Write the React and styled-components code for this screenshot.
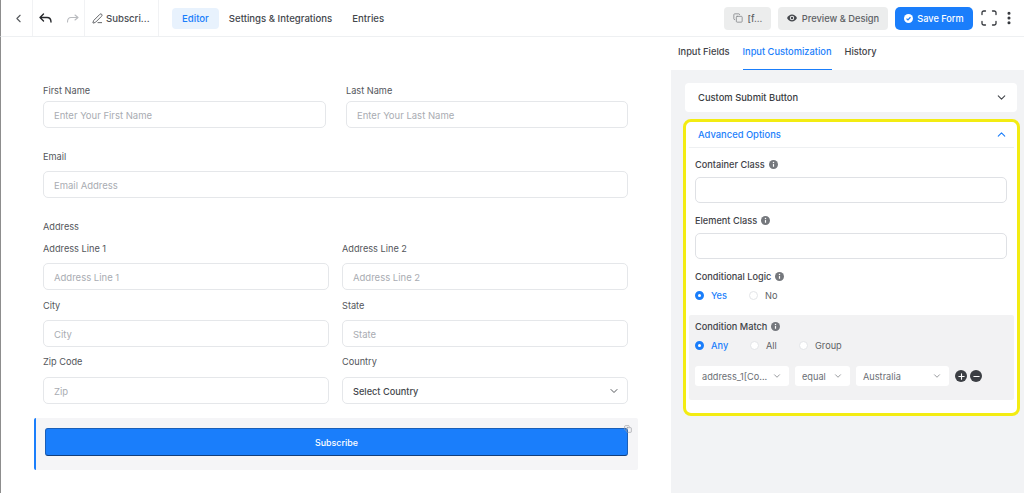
import React from "react";
import styled, { createGlobalStyle } from "styled-components";
import { ChevronLeft, ChevronDown, ChevronUp, PenLine, Copy, EllipsisVertical, Plus, Minus } from "lucide-react";

const Global = createGlobalStyle`
  html, body { margin: 0; padding: 0; background: #fff; }
  body { font-family: Inter, "Liberation Sans", sans-serif; color: #444; }
  * { box-sizing: border-box; }
`;

const Page = styled.div`
  width: 1024px;
  height: 493px;
  overflow: hidden;
  display: flex;
  flex-direction: column;
`;

const TopBar = styled.header`
  height: 37px;
  display: flex;
  align-items: center;
  border-bottom: 1px solid #eef0f2;
  border-left: 1px solid #8d8d8d;
  flex-shrink: 0;
`;

const BarCell = styled.div`
  height: 36px;
  display: flex;
  align-items: center;
  gap: ${(p) => p.$gap || 0}px;
  width: ${(p) => p.$width}px;
  padding-left: ${(p) => p.$left || 0}px;
  border-right: 1px solid #f1f2f4;
  font-size: 9.6px;
  font-weight: 500;
  color: #4a4d52;
`;

const Nav = styled.nav`
  display: flex;
  align-items: center;
  margin-left: 13px;
`;

const NavItem = styled.div`
  height: 21px;
  display: flex;
  align-items: center;
  padding: 0 10px;
  border-radius: 4px;
  font-size: 9.6px;
  font-weight: 500;
  background: ${(p) => (p.$active ? "#e8f2fd" : "transparent")};
  color: ${(p) => (p.$active ? "#1a7efb" : "#44474c")};
`;

const BarActions = styled.div`
  margin-left: auto;
  display: flex;
  align-items: center;
  padding-right: 7px;
`;

const GreyButton = styled.div`
  height: 23px;
  width: ${(p) => p.$width}px;
  margin-right: 7px;
  background: #eceded;
  border-radius: 4px;
  display: flex;
  align-items: center;
  justify-content: center;
  gap: 5px;
  font-size: 9.3px;
  font-weight: 500;
  color: #606266;
`;

const SaveButton = styled.div`
  height: 23px;
  width: 78px;
  margin-right: 8px;
  background: #1a7efb;
  border-radius: 5px;
  color: #fff;
  font-size: 9.2px;
  font-weight: 500;
  display: flex;
  align-items: center;
  justify-content: center;
  gap: 4px;
`;

const MoreIcon = styled(EllipsisVertical)`
  margin-left: 4px;
`;

const Body = styled.div`
  flex: 1;
  display: flex;
  min-height: 0;
`;

const Canvas = styled.main`
  width: 671px;
  flex-shrink: 0;
  border-left: 1px solid #8d8d8d;
  padding: 46px 0 0 33px;
`;

const FormInner = styled.div`
  width: 604px;
`;

const Row = styled.div`
  display: grid;
  grid-template-columns: ${(p) => p.$cols || "1fr"};
  column-gap: ${(p) => p.$gap || 0}px;
  padding: 0 10px 0 9px;
  margin-bottom: ${(p) => p.$bottom || 0}px;
`;

const Field = styled.div`
  display: flex;
  flex-direction: column;
`;

const Label = styled.label`
  height: 14px;
  line-height: 14px;
  padding-top: 1px;
  font-size: 9.2px;
  color: #53565b;
  margin-bottom: ${(p) => p.$bottom}px;
`;

const Input = styled.div`
  height: 27px;
  border: 1px solid #e5e7ea;
  border-radius: 5px;
  display: flex;
  align-items: center;
  justify-content: space-between;
  padding: 1px ${(p) => (p.$filled ? 7 : 10)}px 0 10px;
  font-size: ${(p) => (p.$filled ? 9.2 : 9.5)}px;
  color: ${(p) => (p.$filled ? "#44474c" : "#a9acb2")};
  font-weight: ${(p) => (p.$filled ? 500 : 400)};
`;

const SectionTitle = styled.div`
  height: 14px;
  line-height: 14px;
  padding: 1px 0 0 9px;
  font-size: 9.2px;
  color: #53565b;
  margin-bottom: 8px;
`;

const SubmitWrap = styled.div`
  position: relative;
  height: 52px;
  margin-top: 14px;
  background: #f5f5f7;
  border-left: 2px solid #1a7efb;
  border-radius: 2px;
  padding: 10px 10px 0 9px;
`;

const SubmitButton = styled.div`
  height: 28px;
  background: #1a7efb;
  border: 1px solid #1a5fb8;
  border-bottom: 1px solid #123f7c;
  border-radius: 3px;
  display: flex;
  align-items: center;
  justify-content: center;
  color: #fff;
  font-size: 8.9px;
  font-weight: 500;
`;

const CopyMark = styled.span`
  position: absolute;
  top: 7px;
  right: 6px;
  color: #9a9ca0;
  display: flex;
`;

const Side = styled.aside`
  flex: 1;
  background: #f2f3f5;
  display: flex;
  flex-direction: column;
`;

const Tabs = styled.div`
  height: 33px;
  background: #fff;
  display: flex;
  padding-left: 7px;
  gap: 13px;
  flex-shrink: 0;
`;

const Tab = styled.div`
  height: 33px;
  padding-top: 9px;
  font-size: 9.3px;
  font-weight: 500;
  color: ${(p) => (p.$active ? "#1a7efb" : "#3f4247")};
  border-bottom: 1px solid ${(p) => (p.$active ? "#1a7efb" : "transparent")};
`;

const Panel = styled.div`
  padding: 13px 4px 0 12px;
`;

const Card = styled.div`
  height: 29px;
  width: 332px;
  margin-left: 2px;
  background: #fff;
  border-radius: 4px;
  display: flex;
  align-items: center;
  justify-content: space-between;
  padding: 0 9px 0 13px;
  font-size: 9.4px;
  font-weight: 500;
  color: #3a3d42;
`;

const AdvancedCard = styled.section`
  margin-top: 7px;
  width: 337px;
  height: 297px;
  background: #fff;
  border: 3px solid #f3ec12;
  border-radius: 8px;
`;

const AdvancedHead = styled.div`
  height: 26px;
  margin: 0 3px;
  border-bottom: 1px solid #eef0f2;
  display: flex;
  align-items: center;
  justify-content: space-between;
  padding: 0 6px 0 9px;
  color: #1a7efb;
  font-size: 9.4px;
  font-weight: 500;
`;

const Group = styled.div`
  padding: 9px 10px 0 9px;
`;

const GroupLabel = styled.div`
  height: 14px;
  display: flex;
  align-items: center;
  gap: 4px;
  font-size: 9.2px;
  font-weight: 500;
  color: #3f4247;
  margin-bottom: ${(p) => p.$bottom}px;
`;

const SideInput = styled.div`
  height: 26px;
  border: 1px solid #dfe1e5;
  border-radius: 5px;
  background: #fff;
  margin-bottom: 10px;
`;

const Radios = styled.div`
  display: flex;
  align-items: center;
  height: 12px;
`;

const Radio = styled.div`
  width: ${(p) => p.$width}px;
  display: flex;
  align-items: center;
  gap: 7px;
  font-size: 9.2px;
  font-weight: ${(p) => (p.$on ? 500 : 400)};
  color: ${(p) => (p.$on ? "#1a7efb" : "#606266")};
`;

const Dot = styled.span`
  width: 9px;
  height: 9px;
  border-radius: 50%;
  flex-shrink: 0;
  background: #fff;
  border: ${(p) => (p.$on ? "3px solid #1a7efb" : "1px solid #e3e5e8")};
`;

const MatchBox = styled.div`
  margin: 14px 3px 0;
  height: 85px;
  background: #f2f2f3;
  border-radius: 2px;
  padding: 4px 6px 0;
`;

const SelectRow = styled.div`
  display: flex;
  align-items: center;
  gap: 6px;
  margin-top: 15px;
`;

const Select = styled.div`
  width: ${(p) => p.$width}px;
  height: 20px;
  background: #fff;
  border-radius: 3px;
  display: flex;
  align-items: center;
  justify-content: space-between;
  padding: 0 7px;
  font-size: 9.2px;
  color: #6c6f75;
`;

const RoundButtons = styled.div`
  display: flex;
  gap: 3px;
`;

const RoundButton = styled.div`
  width: 12px;
  height: 12px;
  border-radius: 50%;
  background: #3c3f44;
  display: flex;
  align-items: center;
  justify-content: center;
  color: #fff;
`;

const UndoIcon = () => (
  <svg width="13" height="10" viewBox="0 0 13 10" fill="none" stroke="#26282c" strokeWidth="1.4" strokeLinecap="round" strokeLinejoin="round">
    <path d="M4.500 1 1 4.500 4.500 8M1 4.500h7c2.500 0 4 1.500 4 4.500" />
  </svg>
);

const RedoIcon = () => (
  <svg width="13" height="10" viewBox="0 0 13 10" fill="none" stroke="#b9bbbf" strokeWidth="1.1" strokeLinecap="round" strokeLinejoin="round">
    <path d="M9 2l3 2.500L9 7M12 4.500H5c-2 0-3.500 1.500-3.500 4.500" />
  </svg>
);

const EyeIcon = () => (
  <svg width="10" height="8" viewBox="0 0 10 8">
    <path d="M0 4c1.200-2.300 2.900-3.500 5-3.500S8.800 1.700 10 4C8.800 6.300 7.100 7.500 5 7.500S1.200 6.300 0 4z" fill="#44474c" />
    <circle cx="5" cy="4" r="2.200" fill="#eceded" />
    <circle cx="5" cy="4" r="1.200" fill="#44474c" />
  </svg>
);

const FullscreenIcon = () => (
  <svg width="16" height="16" viewBox="0 0 16 16" fill="none" stroke="#33363b" strokeWidth="1.3" strokeLinecap="round">
    <path d="M1 4.500V2.800A1.800 1.800 0 0 1 2.800 1h1.700M11.500 1h1.700A1.800 1.800 0 0 1 15 2.800v1.700M15 11.500v1.700a1.800 1.800 0 0 1-1.800 1.800h-1.700M4.500 15H2.800A1.800 1.800 0 0 1 1 13.200v-1.700" />
  </svg>
);

const CheckBadge = () => (
  <svg width="9" height="9" viewBox="0 0 10 10">
    <circle cx="5" cy="5" r="5" fill="#fff" />
    <path d="M2.800 5.100 4.400 6.600 7.200 3.600" fill="none" stroke="#1a7efb" strokeWidth="1.400" />
  </svg>
);

const Hint = () => (
  <svg width="9" height="9" viewBox="0 0 10 10">
    <circle cx="5" cy="5" r="5" fill="#75787d" />
    <path d="M5 4.500v3" stroke="#fff" strokeWidth="1.300" />
    <circle cx="5" cy="2.800" r=".8" fill="#fff" />
  </svg>
);

export default function App() {
  return (
    <Page>
      <Global />
      <TopBar>
        <BarCell $width={32} $left={11}><ChevronLeft size={13} color="#55585c" /></BarCell>
        <BarCell $width={52} $left={6} $gap={14}>
          <UndoIcon />
          <RedoIcon />
        </BarCell>
        <BarCell $width={74} $left={7} $gap={3}>
          <PenLine size={11} color="#55585c" />
          Subscri...
        </BarCell>
        <Nav>
          <NavItem $active>Editor</NavItem>
          <NavItem>Settings &amp; Integrations</NavItem>
          <NavItem>Entries</NavItem>
        </Nav>
        <BarActions>
          <GreyButton $width={47}><Copy size={10} color="#85888c" />[f...</GreyButton>
          <GreyButton $width={110}><EyeIcon />Preview &amp; Design</GreyButton>
          <SaveButton><CheckBadge />Save Form</SaveButton>
          <FullscreenIcon />
          <MoreIcon size={16} color="#33363b" strokeWidth={2.6} />
        </BarActions>
      </TopBar>
      <Body>
        <Canvas>
          <FormInner>
            <Row $cols="283px 282px" $gap={20} $bottom={21}>
              <Field><Label $bottom={4}>First Name</Label><Input>Enter Your First Name</Input></Field>
              <Field><Label $bottom={4}>Last Name</Label><Input>Enter Your Last Name</Input></Field>
            </Row>
            <Row $bottom={21}>
              <Field><Label $bottom={8}>Email</Label><Input>Email Address</Input></Field>
            </Row>
            <SectionTitle>Address</SectionTitle>
            <Row $cols="286px 286px" $gap={13} $bottom={8}>
              <Field><Label $bottom={8}>Address Line 1</Label><Input>Address Line 1</Input></Field>
              <Field><Label $bottom={8}>Address Line 2</Label><Input>Address Line 2</Input></Field>
            </Row>
            <Row $cols="286px 286px" $gap={13} $bottom={7}>
              <Field><Label $bottom={8}>City</Label><Input>City</Input></Field>
              <Field><Label $bottom={8}>State</Label><Input>State</Input></Field>
            </Row>
            <Row $cols="286px 286px" $gap={13}>
              <Field><Label $bottom={9}>Zip Code</Label><Input>Zip</Input></Field>
              <Field><Label $bottom={9}>Country</Label><Input $filled>Select Country<ChevronDown size={12} color="#55585c" /></Input></Field>
            </Row>
            <SubmitWrap>
              <SubmitButton>Subscribe</SubmitButton>
              <CopyMark><Copy size={8} /></CopyMark>
            </SubmitWrap>
          </FormInner>
        </Canvas>
        <Side>
          <Tabs>
            <Tab>Input Fields</Tab>
            <Tab $active>Input Customization</Tab>
            <Tab>History</Tab>
          </Tabs>
          <Panel>
            <Card>Custom Submit Button<ChevronDown size={13} color="#44474c" /></Card>
            <AdvancedCard>
              <AdvancedHead>Advanced Options<ChevronUp size={13} color="#1a7efb" /></AdvancedHead>
              <Group>
                <GroupLabel $bottom={6}>Container Class<Hint /></GroupLabel>
                <SideInput />
                <GroupLabel $bottom={6}>Element Class<Hint /></GroupLabel>
                <SideInput />
                <GroupLabel $bottom={6}>Conditional Logic<Hint /></GroupLabel>
                <Radios>
                  <Radio $on $width={54}><Dot $on />Yes</Radio>
                  <Radio $width={40}><Dot />No</Radio>
                </Radios>
              </Group>
              <MatchBox>
                <GroupLabel $bottom={6}>Condition Match<Hint /></GroupLabel>
                <Radios>
                  <Radio $on $width={55}><Dot $on />Any</Radio>
                  <Radio $width={49}><Dot />All</Radio>
                  <Radio $width={60}><Dot />Group</Radio>
                </Radios>
                <SelectRow>
                  <Select $width={94}>address_1[Co...<ChevronDown size={10} color="#85888c" /></Select>
                  <Select $width={55}>equal<ChevronDown size={10} color="#85888c" /></Select>
                  <Select $width={93}>Australia<ChevronDown size={10} color="#85888c" /></Select>
                  <RoundButtons>
                    <RoundButton><Plus size={9} strokeWidth={3} /></RoundButton>
                    <RoundButton><Minus size={9} strokeWidth={3} /></RoundButton>
                  </RoundButtons>
                </SelectRow>
              </MatchBox>
            </AdvancedCard>
          </Panel>
        </Side>
      </Body>
    </Page>
  );
}
